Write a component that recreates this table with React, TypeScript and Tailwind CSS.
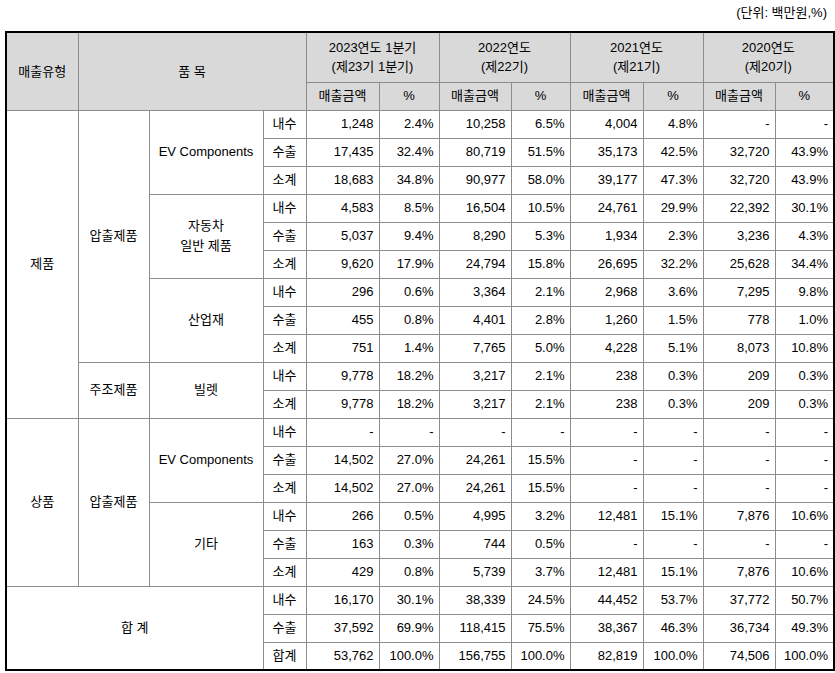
import React from "react";

type Row = { k: string; v: string[] };

const groups: {
  type?: { label: string; span: number };
  item?: { label: string; span: number };
  sub?: { label: React.ReactNode; span: number };
  total?: boolean;
  rows: Row[];
}[] = [
  {
    type: { label: "제품", span: 11 },
    item: { label: "압출제품", span: 9 },
    sub: { label: "EV Components", span: 3 },
    rows: [
      { k: "내수", v: ["1,248", "2.4%", "10,258", "6.5%", "4,004", "4.8%", "-", "-"] },
      { k: "수출", v: ["17,435", "32.4%", "80,719", "51.5%", "35,173", "42.5%", "32,720", "43.9%"] },
      { k: "소계", v: ["18,683", "34.8%", "90,977", "58.0%", "39,177", "47.3%", "32,720", "43.9%"] },
    ],
  },
  {
    sub: {
      label: (
        <>
          자동차
          <br />
          일반 제품
        </>
      ),
      span: 3,
    },
    rows: [
      { k: "내수", v: ["4,583", "8.5%", "16,504", "10.5%", "24,761", "29.9%", "22,392", "30.1%"] },
      { k: "수출", v: ["5,037", "9.4%", "8,290", "5.3%", "1,934", "2.3%", "3,236", "4.3%"] },
      { k: "소계", v: ["9,620", "17.9%", "24,794", "15.8%", "26,695", "32.2%", "25,628", "34.4%"] },
    ],
  },
  {
    sub: { label: "산업재", span: 3 },
    rows: [
      { k: "내수", v: ["296", "0.6%", "3,364", "2.1%", "2,968", "3.6%", "7,295", "9.8%"] },
      { k: "수출", v: ["455", "0.8%", "4,401", "2.8%", "1,260", "1.5%", "778", "1.0%"] },
      { k: "소계", v: ["751", "1.4%", "7,765", "5.0%", "4,228", "5.1%", "8,073", "10.8%"] },
    ],
  },
  {
    item: { label: "주조제품", span: 2 },
    sub: { label: "빌렛", span: 2 },
    rows: [
      { k: "내수", v: ["9,778", "18.2%", "3,217", "2.1%", "238", "0.3%", "209", "0.3%"] },
      { k: "소계", v: ["9,778", "18.2%", "3,217", "2.1%", "238", "0.3%", "209", "0.3%"] },
    ],
  },
  {
    type: { label: "상품", span: 6 },
    item: { label: "압출제품", span: 6 },
    sub: { label: "EV Components", span: 3 },
    rows: [
      { k: "내수", v: ["-", "-", "-", "-", "-", "-", "-", "-"] },
      { k: "수출", v: ["14,502", "27.0%", "24,261", "15.5%", "-", "-", "-", "-"] },
      { k: "소계", v: ["14,502", "27.0%", "24,261", "15.5%", "-", "-", "-", "-"] },
    ],
  },
  {
    sub: { label: "기타", span: 3 },
    rows: [
      { k: "내수", v: ["266", "0.5%", "4,995", "3.2%", "12,481", "15.1%", "7,876", "10.6%"] },
      { k: "수출", v: ["163", "0.3%", "744", "0.5%", "-", "-", "-", "-"] },
      { k: "소계", v: ["429", "0.8%", "5,739", "3.7%", "12,481", "15.1%", "7,876", "10.6%"] },
    ],
  },
  {
    total: true,
    rows: [
      { k: "내수", v: ["16,170", "30.1%", "38,339", "24.5%", "44,452", "53.7%", "37,772", "50.7%"] },
      { k: "수출", v: ["37,592", "69.9%", "118,415", "75.5%", "38,367", "46.3%", "36,734", "49.3%"] },
      { k: "합계", v: ["53,762", "100.0%", "156,755", "100.0%", "82,819", "100.0%", "74,506", "100.0%"] },
    ],
  },
];

const widths = [72, 71, 114, 43, 73, 60, 72, 59, 73, 60, 72, 59];

const cell = "border border-[#8c8c8c] p-0";
const c = `${cell} text-center align-middle`;
const r = `${cell} text-right align-middle pr-[5px]`;

export default function App() {
  return (
    <div
      className="w-[835px] h-[673px] bg-white text-black text-[13px]"
      style={{ fontFamily: '"Liberation Sans", "Noto Sans CJK KR", sans-serif' }}
    >
      <div className="h-[31px] flex items-center justify-end pr-[8px] pb-[6px]">
        (단위: 백만원,%)
      </div>
      <table className="ml-[5px] table-fixed border-collapse border-2 border-black w-[829px]">
        <colgroup>
          {widths.map((w, i) => (
            <col key={i} style={{ width: w }} />
          ))}
        </colgroup>
        <thead>
          <tr className="h-[50px] bg-[#d9d9d9]">
            <td rowSpan={2} className={c}>
              매출유형
            </td>
            <td rowSpan={2} colSpan={3} className={c}>
              품 목
            </td>
            <td colSpan={2} className={`${c} leading-[19px]`}>
              2023연도 1분기
              <br />
              (제23기 1분기)
            </td>
            <td colSpan={2} className={`${c} leading-[19px]`}>
              2022연도
              <br />
              (제22기)
            </td>
            <td colSpan={2} className={`${c} leading-[19px]`}>
              2021연도
              <br />
              (제21기)
            </td>
            <td colSpan={2} className={`${c} leading-[19px]`}>
              2020연도
              <br />
              (제20기)
            </td>
          </tr>
          <tr className="h-[28px] bg-[#d9d9d9]">
            <td className={c}>매출금액</td>
            <td className={c}>%</td>
            <td className={c}>매출금액</td>
            <td className={c}>%</td>
            <td className={c}>매출금액</td>
            <td className={c}>%</td>
            <td className={c}>매출금액</td>
            <td className={c}>%</td>
          </tr>
        </thead>
        <tbody>
          {groups.map((g, gi) =>
            g.rows.map((row, ri) => (
              <tr key={`${gi}-${ri}`} className="h-[28px]">
                {ri === 0 && g.total && (
                  <td rowSpan={3} colSpan={3} className={c}>
                    합 계
                  </td>
                )}
                {ri === 0 && g.type && (
                  <td rowSpan={g.type.span} className={c}>
                    {g.type.label}
                  </td>
                )}
                {ri === 0 && g.item && (
                  <td rowSpan={g.item.span} className={c}>
                    {g.item.label}
                  </td>
                )}
                {ri === 0 && g.sub && (
                  <td rowSpan={g.sub.span} className={`${c} leading-[20px]`}>
                    {g.sub.label}
                  </td>
                )}
                <td className={c}>{row.k}</td>
                {row.v.map((v, vi) => (
                  <td key={vi} className={r}>
                    {v}
                  </td>
                ))}
              </tr>
            ))
          )}
        </tbody>
      </table>
    </div>
  );
}
